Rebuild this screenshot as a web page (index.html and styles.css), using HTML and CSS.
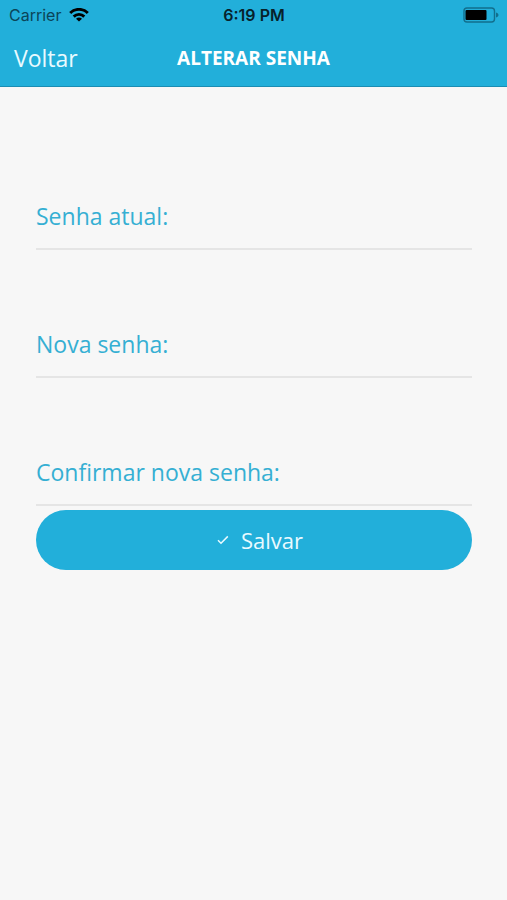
FILE: index.html
```html
<!DOCTYPE html>
<html lang="pt-BR">
<head>
<meta charset="utf-8">
<meta name="viewport" content="width=device-width, initial-scale=1">
<title>Alterar senha</title>
<link rel="stylesheet" href="styles.css">
</head>
<body>
<header class="header">
  <div class="status">
    <div class="status-left">
      <span class="carrier">Carrier</span>
      <svg class="wifi" viewBox="0 0 20 14" width="20" height="14" aria-hidden="true">
        <g fill="none" stroke="currentColor" stroke-width="2.9">
          <path d="M1.2 5a12.4 12.4 0 0 1 17.6 0"/>
          <path d="M4.7 8.6a7.5 7.5 0 0 1 10.6 0"/>
        </g>
        <path d="M10 13.6L7 10.8a4.4 4.4 0 0 1 6 0z" fill="currentColor"/>
      </svg>
    </div>
    <span class="time">6:19 PM</span>
    <div class="status-right">
      <svg class="battery" viewBox="0 0 36 16" width="36" height="16" aria-hidden="true">
        <rect x="1" y="1" width="30.5" height="14" rx="3" fill="none" stroke="#126f8d" stroke-width="1.4"/>
        <rect x="2.5" y="3" width="21" height="10" rx="1" fill="#000"/>
        <path d="M33 5.5c3.3 1 3.3 4 0 5z" fill="#126f8d"/>
      </svg>
    </div>
  </div>
  <nav class="navbar">
    <a class="back" href="#">Voltar</a>
    <h1 class="title">ALTERAR SENHA</h1>
  </nav>
</header>
<main>
  <form class="form">
    <div class="field">
      <label for="current">Senha atual:</label>
      <input id="current" type="password">
    </div>
    <div class="field">
      <label for="new">Nova senha:</label>
      <input id="new" type="password">
    </div>
    <div class="field">
      <label for="confirm">Confirmar nova senha:</label>
      <input id="confirm" type="password">
    </div>
    <button class="save" type="button">
      <svg viewBox="0 0 12 10" width="12" height="10" aria-hidden="true">
        <path d="M1 5.2L4 8.2L10.8 1.4" fill="none" stroke="currentColor" stroke-width="1.5"/>
      </svg>
      Salvar
    </button>
  </form>
</main>
</body>
</html>
```
FILE: styles.css
```css
* {
  box-sizing: border-box;
}

body {
  margin: 0;
  min-height: 100vh;
  background: #f7f7f7;
  font-family: "Open Sans", "Noto Sans", sans-serif;
}

.header {
  background: #22afda;
  border-bottom: 1px solid #1b8db3;
}

.status,
.navbar {
  display: grid;
  grid-template-columns: 1fr auto 1fr;
  align-items: center;
}

.status {
  height: 30px;
  padding: 0 8px 0 9px;
  font-family: Inter, "Liberation Sans", sans-serif;
  font-size: 16px;
  color: #07222b;
}

.status-left {
  display: flex;
  align-items: center;
  gap: 8px;
}

.carrier {
  color: #0b4558;
}

.wifi {
  color: #000;
}

.time {
  font-weight: 600;
}

.status-right {
  display: flex;
  justify-content: flex-end;
}

.navbar {
  height: 56px;
  padding: 0 14px;
}

.back {
  color: #e9faff;
  font-size: 23px;
  text-decoration: none;
}

.title {
  margin: 0;
  color: #fff;
  font-size: 19px;
  font-weight: 700;
}

.form {
  padding: 35px 35px 0 36px;
}

.field {
  display: flex;
  align-items: flex-end;
  gap: 8px;
  height: 128px;
  padding-bottom: 16px;
  border-bottom: 2px solid #e5e5e5;
}

.field label {
  color: #35afd3;
  font-size: 23px;
  line-height: 32px;
}

.field input {
  flex: 1;
  min-width: 0;
  height: 32px;
  padding: 0;
  border: 0;
  outline: 0;
  background: transparent;
  color: #333;
  font: inherit;
  font-size: 23px;
}

.save {
  display: flex;
  align-items: center;
  justify-content: center;
  gap: 12px;
  width: 100%;
  height: 60px;
  margin-top: 4px;
  padding: 0 0 0 12px;
  border: 0;
  border-radius: 30px;
  background: #22afda;
  color: #e9faff;
  font: inherit;
  font-size: 22px;
}
```
